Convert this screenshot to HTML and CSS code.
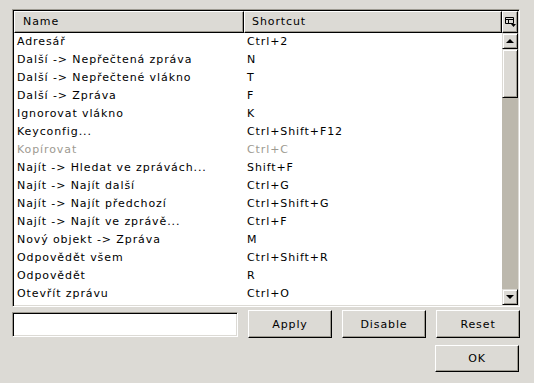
FILE: index.html
```html
<!DOCTYPE html>
<html lang="cs">

<head>
    <meta charset="UTF-8">
    <title>Keyconfig</title>
    <link rel="stylesheet" href="styles.css">
</head>

<body>
    <div class="dialog">
        <div class="tree">
            <div class="tree-head">
                <div class="col col-name">Name</div>
                <div class="col col-key">Shortcut</div>
                <div class="col-picker">
                    <svg width="11" height="10" viewBox="0 0 11 10">
                        <path d="M0.5 0.5h8v6h-8z M0.5 2.5h8 M3.5 2.5v4" fill="none" stroke="#000" />
                        <path d="M6 7h5l-2.5 3z" fill="#000" />
                    </svg>
                </div>
            </div>
            <div class="tree-body">
                <div class="rows" id="rows"></div>
                <div class="scrollbar">
                    <div class="sb-btn"><span class="arrow-up"></span></div>
                    <div class="sb-thumb"></div>
                    <div class="sb-track"></div>
                    <div class="sb-btn"><span class="arrow-down"></span></div>
                </div>
            </div>
        </div>

        <div class="controls">
            <input type="text" class="key-input">
            <button type="button">Apply</button>
            <button type="button">Disable</button>
            <button type="button">Reset</button>
        </div>
        <div class="footer">
            <button type="button">OK</button>
        </div>
    </div>

    <script>
        const keys = [
            ["Adresář", "Ctrl+2"],
            ["Další -> Nepřečtená zpráva", "N"],
            ["Další -> Nepřečtené vlákno", "T"],
            ["Další -> Zpráva", "F"],
            ["Ignorovat vlákno", "K"],
            ["Keyconfig...", "Ctrl+Shift+F12"],
            ["Kopírovat", "Ctrl+C", true],
            ["Najít -> Hledat ve zprávách...", "Shift+F"],
            ["Najít -> Najít další", "Ctrl+G"],
            ["Najít -> Najít předchozí", "Ctrl+Shift+G"],
            ["Najít -> Najít ve zprávě...", "Ctrl+F"],
            ["Nový objekt -> Zpráva", "M"],
            ["Odpovědět všem", "Ctrl+Shift+R"],
            ["Odpovědět", "R"],
            ["Otevřít zprávu", "Ctrl+O"]
        ];

        const rows = document.getElementById("rows");
        keys.forEach(([name, key, disabled]) => {
            const row = document.createElement("div");
            row.className = disabled ? "row disabled" : "row";
            row.innerHTML = `<span class="cell-name">${name}</span><span class="cell-key">${key}</span>`;
            rows.appendChild(row);
        });
    </script>
</body>

</html>
```

FILE: styles.css
```css
body {
    margin: 0;
    background-color: #dcdad5;
    font-family: "DejaVu Sans", sans-serif;
    font-size: 11px;
    letter-spacing: 0.9px;
    color: #000;
}

.dialog {
    padding: 9px 14px 0 12px;
}

.tree {
    width: 508px;
    height: 298px;
    box-sizing: border-box;
    border: 1px solid;
    border-color: #9d9a91 #ffffff #ffffff #9d9a91;
    box-shadow: inset 1px 1px 0 #000000, inset -1px -1px 0 #dcdad5;
    padding: 1px;
    background-color: #fff;
    display: flex;
    flex-direction: column;
}

.tree-head {
    display: flex;
    height: 22px;
    background-color: #dcdad5;
}

.col,
.col-picker {
    box-sizing: border-box;
    border: 1px solid;
    border-color: #ffffff #000000 #000000 #ffffff;
    box-shadow: inset -1px -1px 0 #9d9a91;
    line-height: 19px;
}

.col-name {
    width: 230px;
    padding-left: 8px;
}

.col-key {
    width: 258px;
    padding-left: 7px;
}

.col-picker {
    width: 16px;
    display: flex;
    align-items: center;
    justify-content: center;
}

.tree-body {
    flex: 1;
    display: flex;
}

.rows {
    flex: 1;
}

.row {
    display: flex;
    height: 18px;
    line-height: 18px;
    white-space: nowrap;
}

.row.disabled {
    color: #9d9a91;
}

.cell-name {
    width: 230px;
    padding-left: 3px;
    box-sizing: border-box;
}

.cell-key {
    padding-left: 3px;
}

.scrollbar {
    width: 16px;
    display: flex;
    flex-direction: column;
    background-color: #bcb8ad;
}

.sb-btn,
.sb-thumb {
    box-sizing: border-box;
    background-color: #dcdad5;
    border: 1px solid;
    border-color: #dcdad5 #000000 #000000 #dcdad5;
    box-shadow: inset 1px 1px 0 #ffffff, inset -1px -1px 0 #9d9a91;
}

.sb-btn {
    height: 16px;
    display: flex;
    align-items: center;
    justify-content: center;
}

.sb-thumb {
    height: 49px;
}

.sb-track {
    flex: 1;
}

.arrow-up,
.arrow-down {
    width: 0;
    height: 0;
    border-left: 4px solid transparent;
    border-right: 4px solid transparent;
}

.arrow-up {
    border-bottom: 4px solid #000;
}

.arrow-down {
    border-top: 4px solid #000;
}

.controls {
    display: flex;
    align-items: center;
    margin-top: 3px;
    width: 508px;
}

.key-input {
    width: 226px;
    height: 25px;
    box-sizing: border-box;
    margin: 0 10px 0 0;
    border: 1px solid;
    border-color: #9d9a91 #ffffff #ffffff #9d9a91;
    box-shadow: inset 1px 1px 0 #000000, inset -1px -1px 0 #dcdad5;
    background-color: #fff;
    font-family: "DejaVu Sans", sans-serif;
    font-size: 11px;
}

button {
    width: 84px;
    height: 28px;
    box-sizing: border-box;
    background-color: #dcdad5;
    border: 1px solid;
    border-color: #ffffff #000000 #000000 #ffffff;
    box-shadow: inset -1px -1px 0 #9d9a91;
    font-family: "DejaVu Sans", sans-serif;
    font-size: 11px;
    letter-spacing: 0.9px;
    color: #000;
    padding: 0;
    margin-right: 10px;
}

.controls button:last-child {
    margin-right: 0;
}

.footer {
    display: flex;
    justify-content: flex-end;
    width: 507px;
    margin-top: 7px;
}

.footer button {
    height: 27px;
    margin-right: 0;
}
```
